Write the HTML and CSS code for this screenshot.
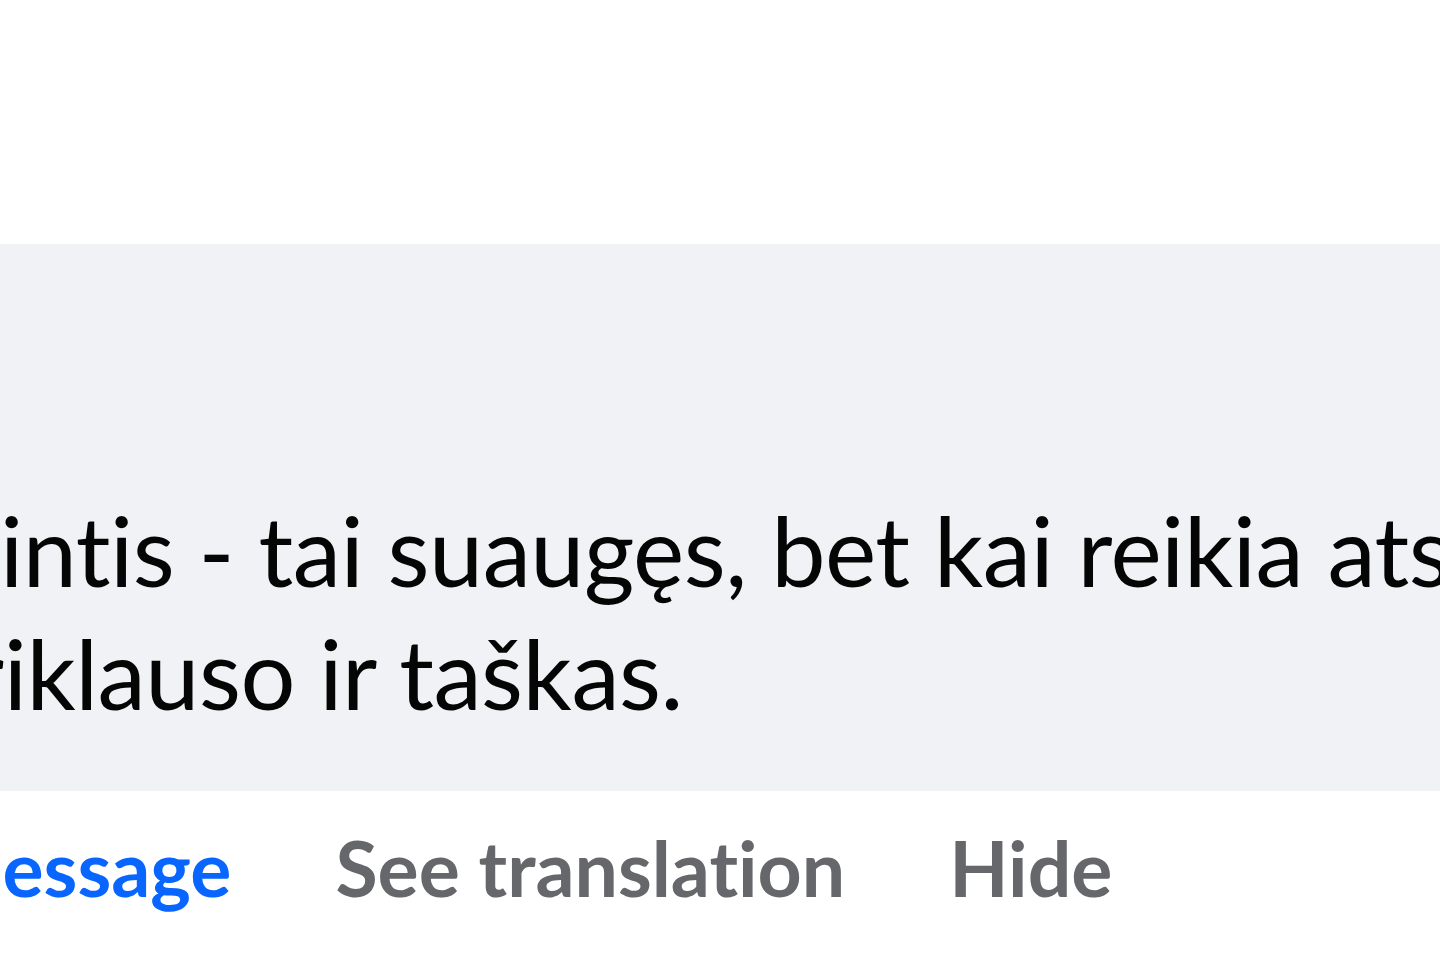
FILE: index.html
```html
<!DOCTYPE html>
<html lang="lt">
<head>
    <meta charset="UTF-8">
    <meta name="viewport" content="width=device-width, initial-scale=1.0">
    <title>Komentaras</title>
    <link rel="stylesheet" href="styles.css">
</head>
<body>
    <div class="comment">
        <!-- Comment bubble -->
        <div class="bubble">
            <div class="line">intis - tai suaugęs, bet kai reikia atsakyti už savo veiksmus</div>
            <div class="line line-cut">priklauso ir taškas.</div>
        </div>

        <!-- Actions under the comment -->
        <div class="actions">
            <a class="action action-blue action-cut" href="#">message</a>
            <a class="action" href="#">See translation</a>
            <a class="action" href="#">Hide</a>
        </div>
    </div>
</body>
</html>
```

FILE: styles.css
```css
body {
    margin: 0;
    background-color: #ffffff;
    font-family: Lato, "Segoe UI", "Noto Sans", sans-serif;
    font-variant-ligatures: none;
    overflow: hidden;
}

.comment {
    width: 1440px;
    height: 960px;
    padding-top: 244px;
    box-sizing: border-box;
    overflow: hidden;
}

.bubble {
    background-color: #f0f2f5;
    padding: 244px 0 57px 0;
    color: #050505;
    font-size: 97px;
    line-height: 123px;
    letter-spacing: -0.5px;
}

.line {
    white-space: nowrap;
}

.line-cut {
    text-indent: -85px;
}

.actions {
    display: flex;
    gap: 104px;
    margin-top: 26px;
    font-size: 77px;
    line-height: 100px;
    font-weight: 700;
    white-space: nowrap;
}

.action {
    color: #65676b;
    text-decoration: none;
}

.action-blue {
    color: #0866ff;
}

.action-cut {
    margin-left: -62px;
}
```
